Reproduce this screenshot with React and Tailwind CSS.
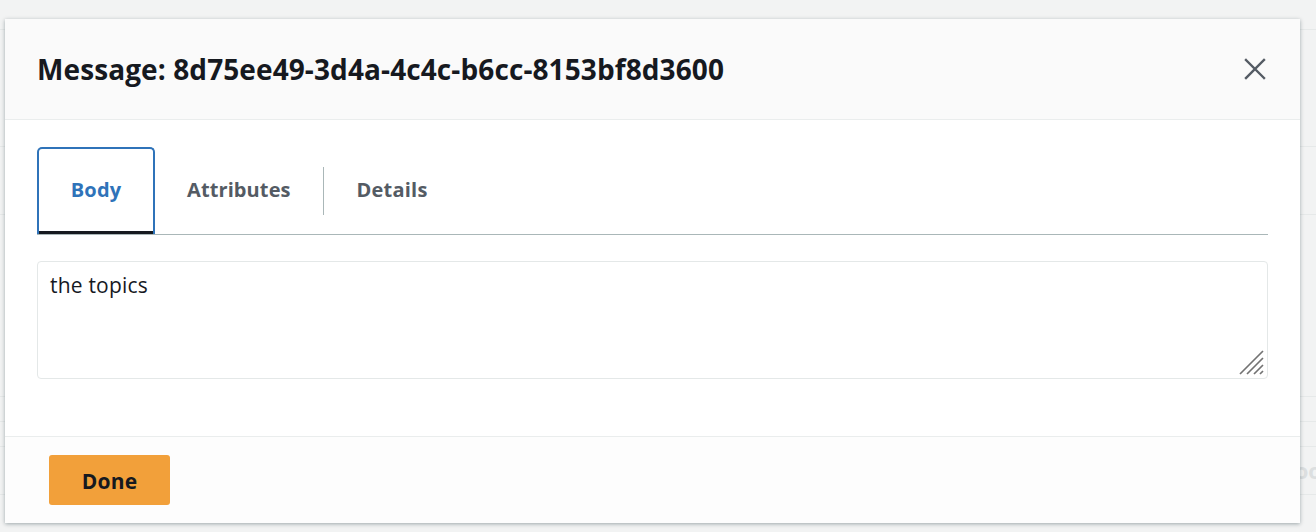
import React from "react";

function CloseIcon() {
  return (
    <svg width="22" height="22" viewBox="0 0 22 22" fill="none">
      <path d="M2 2 L20 20 M20 2 L2 20" stroke="#545b64" strokeWidth="2.4" strokeLinecap="square" />
    </svg>
  );
}

function Grip() {
  return (
    <svg width="28" height="28" viewBox="0 0 28 28" className="absolute right-[2px] bottom-[2px]">
      <path d="M3 26 L26 3 M10 26 L26 10 M17 26 L26 17 M23 26 L26 23" stroke="#737373" strokeWidth="1.7" />
    </svg>
  );
}

export default function App() {
  return (
    <div className="relative w-full h-[532px] bg-[#f2f3f3] overflow-hidden" style={{ fontFamily: '"Open Sans", "Noto Sans", sans-serif' }}>
      {/* background table rows */}
      <div className="flex flex-col">
        <div className="h-[30px] border-b border-[#e6e9e9]" />
        <div className="h-[117px] border-b border-[#e6e9e9]" />
        <div className="h-[68px] border-b border-[#e6e9e9]" />
        <div className="h-[182px] border-b border-[#e6e9e9]" />
        <div className="h-[25px] border-b border-[#e6e9e9]" />
        <div className="h-[25px] border-b border-[#e6e9e9]" />
        <div className="h-[48px] border-b border-[#e6e9e9] flex justify-end items-center">
          <span className="text-[22px] font-bold text-[#dcdfe0] translate-x-[6px]">oo</span>
        </div>
      </div>

      {/* modal */}
      <div className="absolute left-[5px] top-[19px] w-[1295px] h-[504px] bg-white flex flex-col shadow-[0_1px_4px_rgba(0,28,36,0.35)]">
        <div className="h-[101px] bg-[#fafafa] border-b border-[#eaeded] flex items-center justify-between pl-[32px] pr-[34px] shrink-0">
          <h1 className="text-[28px] font-bold text-[#16191f] tracking-[0.1px]">Message: 8d75ee49-3d4a-4c4c-b6cc-8153bf8d3600</h1>
          <CloseIcon />
        </div>

        <div className="flex-1 pt-[27px] px-[32px]">
          <div className="flex items-stretch h-[88px] border-b border-[#aab7b8]">
            <div className="w-[118px] border-2 border-b-0 border-[#2f73b9] rounded-t-[5px] flex items-center justify-center relative pb-[4px]">
              <span className="text-[20px] font-bold text-[#2f73b9] tracking-[0.2px]">Body</span>
              <div className="absolute left-0 right-0 bottom-0 h-[3px] bg-[#16191f]" />
            </div>
            <div className="flex items-center px-[32px] pb-[2px]">
              <span className="text-[20px] font-bold text-[#545b64] tracking-[0.1px]">Attributes</span>
            </div>
            <div className="flex items-center">
              <div className="w-px h-[48px] bg-[#aab7b8]" />
            </div>
            <div className="flex items-center px-[33px] pb-[2px]">
              <span className="text-[20px] font-bold text-[#545b64] tracking-[0.2px]">Details</span>
            </div>
          </div>

          <div className="relative mt-[26px] h-[118px] border border-[#e4e8e8] rounded-[4px] px-[12px] pt-[8px]">
            <span className="text-[21px] text-[#16191f] tracking-[0.2px]">the topics</span>
            <Grip />
          </div>
        </div>

        <div className="h-[87px] border-t border-[#eaeded] bg-[#fdfdfd] pl-[44px] pt-[18px] shrink-0">
          <button className="w-[121px] h-[50px] bg-[#f2a03a] rounded-[3px] text-[21px] font-bold text-[#16191f] tracking-[0.2px] pt-[3px]">Done</button>
        </div>
      </div>
    </div>
  );
}
